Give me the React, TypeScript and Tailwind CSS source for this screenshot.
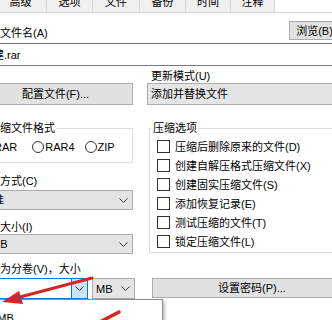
import React from "react";

const Chevron: React.FC = () => (
  <svg width="9" height="5" viewBox="0 0 9 5" className="shrink-0">
    <polyline points="0.5,0.5 4.5,4.5 8.5,0.5" fill="none" stroke="#3a3a3a" strokeWidth="1" />
  </svg>
);

const Combo: React.FC<{ text?: string; className?: string }> = ({ text, className }) => (
  <div className={`flex items-center border border-[#acacac] bg-[#e5e5e5] pl-[3px] pr-[4px] ${className ?? ""}`}>
    <span className="flex-1 whitespace-nowrap overflow-hidden leading-[14px]">{text}</span>
    <Chevron />
  </div>
);

const Button: React.FC<{ label: string; className?: string }> = ({ label, className }) => (
  <div
    className={`flex items-center justify-center border border-[#adadad] bg-[#e1e1e1] leading-[14px] whitespace-nowrap ${className ?? ""}`}
  >
    {label}
  </div>
);

const Check: React.FC<{ label: string; className?: string }> = ({ label, className }) => (
  <div className={`flex items-center h-[19px] ${className ?? ""}`}>
    <span className="w-[13px] h-[13px] border border-[#333] bg-white shrink-0" />
    <span className="ml-[5px] leading-[14px] whitespace-nowrap">{label}</span>
  </div>
);

const Radio: React.FC<{ label: string; className?: string }> = ({ label, className }) => (
  <div className={`flex items-center shrink-0 ${className ?? ""}`}>
    <span className="w-[12px] h-[12px] rounded-full border border-[#333] bg-white shrink-0" />
    <span className="ml-[1px] leading-[14px]">{label}</span>
  </div>
);

const tabs = [
  { label: "高级", w: "w-[52px]" },
  { label: "选项", w: "w-[46px]" },
  { label: "文件", w: "w-[47px]" },
  { label: "备份", w: "w-[46px]" },
  { label: "时间", w: "w-[45px]" },
  { label: "注释", w: "w-[44px]" },
];

const options = [
  "压缩后删除原来的文件(D)",
  "创建自解压格式压缩文件(X)",
  "创建固实压缩文件(S)",
  "添加恢复记录(E)",
  "测试压缩的文件(T)",
  "锁定压缩文件(L)",
];

export default function App() {
  return (
    <div className="relative w-[332px] h-[320px] overflow-hidden bg-white text-[11px] text-black font-['Liberation_Sans','Noto_Sans_CJK_SC',sans-serif]">
      {/* tab strip, top cut off */}
      <div className="flex h-[13px] border-b border-[#d9d9d9]">
        <div className="flex ml-[-5px]">
          {tabs.map((t) => (
            <div
              key={t.label}
              className={`${t.w} h-[12px] bg-[#f0f0f0] border-r border-[#d9d9d9] flex justify-center overflow-hidden`}
            >
              <span className="mt-[-4px] leading-[12px]">{t.label}</span>
            </div>
          ))}
        </div>
      </div>

      <div className="ml-[-22px] w-[374px]">
        <div className="flex h-[22px] mt-[8px]">
          <span className="mt-[5px] leading-[14px]">压缩文件名(A)</span>
          <Button label="浏览(B)" className="ml-auto mr-[12px] w-[51px] h-[19px]" />
        </div>
        <div className="h-[23px] border border-[#7a7a7a] bg-white flex items-center pl-[3px] leading-[14px]">
          新建.rar
        </div>

        <div className="flex items-start">
          {/* left column */}
          <div className="w-[155px] shrink-0 flex flex-col">
            <Button label="配置文件(F)..." className="mt-[17px] h-[22px]" />

            <fieldset className="mt-[16px] border border-[#dcdcdc] pl-[2px] pb-[6px] min-w-0">
              <legend className="ml-[6px] px-[2px] leading-[14px]">压缩文件格式</legend>
              <div className="flex items-center h-[19px] mt-[2px]">
                <Radio label="RAR" />
                <Radio label="RAR4" className="ml-[15px]" />
                <Radio label="ZIP" className="ml-[10px]" />
              </div>
            </fieldset>

            <span className="mt-[11px] leading-[14px]">压缩方式(C)</span>
            <Combo text="标准" className="mt-[2px] h-[20px]" />
            <span className="mt-[10px] leading-[14px]">字典大小(I)</span>
            <Combo text="4 MB" className="h-[20px]" />
            <span className="mt-[8px] leading-[14px] whitespace-nowrap">切分为分卷(V)，大小</span>

            <div className="relative flex mt-[2px] h-[21px]">
              <div className="flex w-[110px] h-full border border-[#0078d7] bg-white shrink-0">
                <div className="flex-1" />
                <div className="w-[16px] bg-[#cce4f7] border-l border-[#0078d7] flex items-center justify-center">
                  <Chevron />
                </div>
              </div>
              <Combo text="MB" className="ml-[4px] w-[43px] h-full shrink-0" />
              {/* open drop-down list */}
              <div className="absolute left-0 top-[21px] w-[185px] h-[40px] border border-[#8c8c8c] bg-white shadow-[2px_2px_3px_rgba(0,0,0,0.25)]">
                <div className="pl-[3px] pt-[11px] leading-[14px]">10 MB</div>
              </div>
            </div>
          </div>

          {/* right column */}
          <div className="w-[205px] ml-[14px] shrink-0 flex flex-col">
            <span className="mt-[3px] pl-[4px] leading-[14px]">更新模式(U)</span>
            <Combo text="添加并替换文件" className="h-[22px]" />

            <fieldset className="mt-[16px] ml-[2px] border border-[#dcdcdc] pl-[7px] pb-[1px] min-w-0">
              <legend className="ml-[-6px] px-[2px] leading-[14px]">压缩选项</legend>
              {options.map((o, i) => (
                <Check key={o} label={o} className={i === 0 ? "mt-[2px]" : ""} />
              ))}
            </fieldset>

            <Button label="设置密码(P)..." className="mt-[25px] ml-[5px] h-[20px]" />
          </div>
        </div>
      </div>

      {/* red annotation arrows */}
      <svg className="absolute inset-0 pointer-events-none" width="332" height="320" viewBox="0 0 332 320">
        <line x1="92" y1="278" x2="20" y2="297" stroke="#d42424" strokeWidth="3" strokeLinecap="round" />
        <polygon points="2,302 19,291 23,304" fill="#d42424" />
        <line x1="119" y1="312" x2="98" y2="323" stroke="#d42424" strokeWidth="3.5" strokeLinecap="round" />
      </svg>
    </div>
  );
}
